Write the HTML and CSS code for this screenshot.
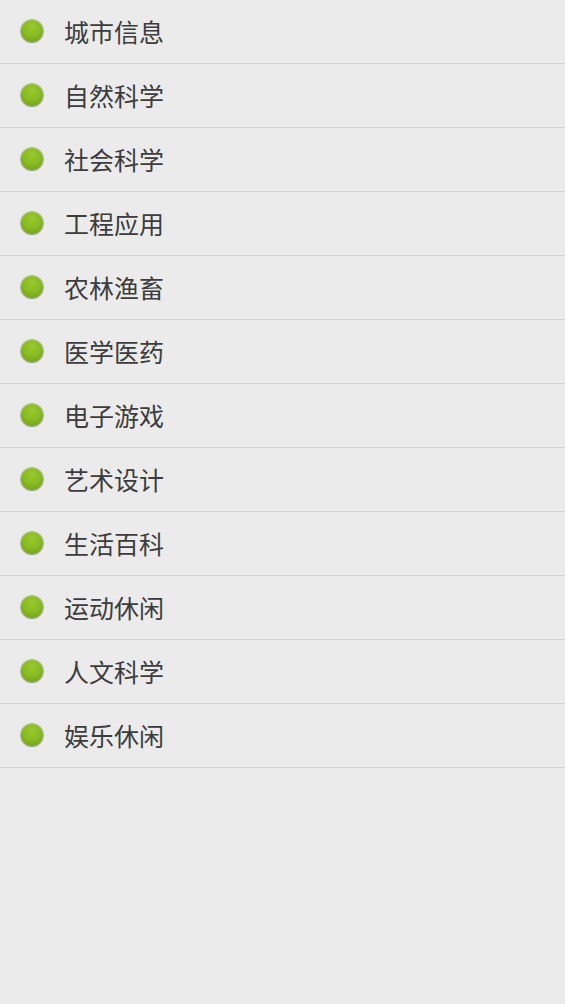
FILE: index.html
```html
<!DOCTYPE html>
<html lang="zh">
<head>
<meta charset="utf-8">
<title>分类</title>
<link rel="stylesheet" href="styles.css">
</head>
<body>
<ul class="list">
  <li class="item"><span class="dot"></span><span class="label">城市信息</span></li>
  <li class="item"><span class="dot"></span><span class="label">自然科学</span></li>
  <li class="item"><span class="dot"></span><span class="label">社会科学</span></li>
  <li class="item"><span class="dot"></span><span class="label">工程应用</span></li>
  <li class="item"><span class="dot"></span><span class="label">农林渔畜</span></li>
  <li class="item"><span class="dot"></span><span class="label">医学医药</span></li>
  <li class="item"><span class="dot"></span><span class="label">电子游戏</span></li>
  <li class="item"><span class="dot"></span><span class="label">艺术设计</span></li>
  <li class="item"><span class="dot"></span><span class="label">生活百科</span></li>
  <li class="item"><span class="dot"></span><span class="label">运动休闲</span></li>
  <li class="item"><span class="dot"></span><span class="label">人文科学</span></li>
  <li class="item"><span class="dot"></span><span class="label">娱乐休闲</span></li>
</ul>
</body>
</html>
```
FILE: styles.css
```css
html, body {
  margin: 0;
  padding: 0;
  background: #ebebeb;
  height: 100%;
}
body {
  font-family: "Noto Sans CJK SC", "Noto Sans", sans-serif;
  color: #3c3c3c;
}
.list {
  list-style: none;
  margin: 0;
  padding: 0;
}
.item {
  height: 63px;
  border-bottom: 1px solid #d4d4d4;
  display: flex;
  align-items: center;
  padding-left: 21px;
  box-sizing: content-box;
}
.dot {
  width: 22px;
  height: 22px;
  border-radius: 50%;
  background: radial-gradient(circle at 50% 30%, #9acb2e 0%, #84b81d 55%, #6b9810 100%);
  box-shadow: 0 0 0 1px rgba(90, 110, 40, 0.35), 0 1px 1px rgba(0, 0, 0, 0.25);
  flex: none;
  margin-top: -1px;
}
.label {
  margin-left: 21px;
  font-size: 25px;
  line-height: 1;
  font-weight: 400;
  margin-top: -1px;
}
```
